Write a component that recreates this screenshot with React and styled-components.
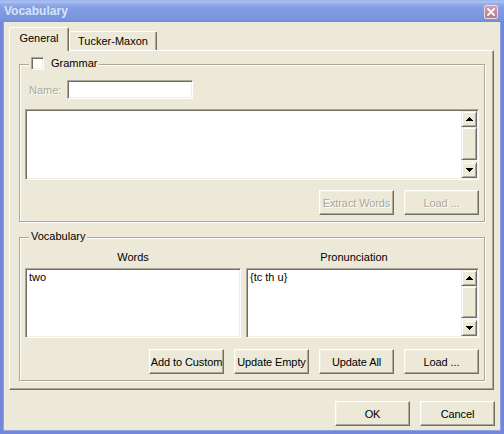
import React from 'react';
import styled, { createGlobalStyle } from 'styled-components';

const Global = createGlobalStyle`
  html, body { margin: 0; padding: 0; background: #ffffff; }
  body { font-family: "Liberation Sans", Arial, sans-serif; font-size: 11px; color: #000; }
  * { box-sizing: border-box; }
`;

const FONT = `"Liberation Sans", Arial, sans-serif`;

const Window = styled.div`
  width: 504px;
  height: 434px;
  display: flex;
  flex-direction: column;
`;

const TitleBar = styled.div`
  height: 22px;
  flex: none;
  display: flex;
  align-items: flex-start;
  justify-content: space-between;
  padding: 4px 6px 0 4px;
  background: linear-gradient(
    to bottom,
    #9cb3ea 0px,
    #abc1f2 2px,
    #93ace9 4px,
    #829de3 8px,
    #7c98e0 15px,
    #7893dd 20px,
    #6f8ad6 22px
  );
`;

const Title = styled.div`
  font: bold 12px/14px ${FONT};
  color: #d8e4f8;
`;

const CloseBtn = styled.div`
  width: 14px;
  height: 14px;
  margin-top: 1px;
  border: 1px solid #ecdce6;
  border-radius: 2px;
  background: linear-gradient(#d3a0b0, #c08596 60%, #b87a8c);
  display: flex;
  align-items: center;
  justify-content: center;
`;

const Frame = styled.div`
  flex: 1;
  display: flex;
  flex-direction: column;
  background: #ece9d8;
  border: 3px solid #7388dc;
  border-top: none;
  box-shadow: inset 1px 0 #8fa2e4, inset -1px 0 #8fa2e4, inset 0 -1px #8fa2e4;
  padding: 5px 6px 5px 6px;
`;

const TabRow = styled.div`
  display: flex;
  align-items: flex-end;
  height: 23px;
  position: relative;
  z-index: 1;
`;

const Tab = styled.div`
  width: ${(p) => p.$w}px;
  height: ${(p) => (p.$active ? 24 : 19)}px;
  margin-bottom: ${(p) => (p.$active ? -1 : 0)}px;
  background: #ece9d8;
  border: 1px solid;
  border-bottom: none;
  border-color: #ffffff #716f64 transparent #ffffff;
  box-shadow: inset -1px 0 #aca899;
  border-radius: 2px 2px 0 0;
  display: flex;
  justify-content: center;
  padding-top: ${(p) => (p.$active ? 4 : 3)}px;
  line-height: 13px;
  font-size: 11px;
`;

const Panel = styled.div`
  width: 485px;
  height: 340px;
  flex: none;
  border: 1px solid;
  border-color: #ffffff #716f64 #716f64 #ffffff;
  box-shadow: inset -1px -1px #aca899;
  padding: 13px 8px 0 9px;
  display: flex;
  flex-direction: column;
  gap: 15px;
`;

const Group = styled.div`
  position: relative;
  border: 1px solid #aca899;
  box-shadow: inset 1px 1px #ffffff, 1px 1px #ffffff;
  padding: ${(p) => p.$pad};
  display: flex;
  flex-direction: column;
`;

const Legend = styled.div`
  position: absolute;
  top: -8px;
  left: 9px;
  height: 13px;
  padding: 0 2px;
  background: #ece9d8;
  display: flex;
  align-items: center;
  gap: 7px;
  line-height: 13px;
`;

const CheckBox = styled.div`
  width: 13px;
  height: 13px;
  background: #ffffff;
  border: 1px solid;
  border-color: #aca899 #ffffff #ffffff #aca899;
  box-shadow: inset 1px 1px #716f64, inset -1px -1px #f1efe2;
`;

const NameRow = styled.div`
  display: flex;
  align-items: center;
  margin-left: 4px;
`;

const Label = styled.span`
  width: 38px;
  color: ${(p) => (p.$disabled ? '#aca899' : '#000')};
  text-shadow: ${(p) => (p.$disabled ? '1px 1px #ffffff' : 'none')};
`;

const Sunken = styled.div`
  background: #ffffff;
  border: 1px solid;
  border-color: #aca899 #ffffff #ffffff #aca899;
  box-shadow: inset 1px 1px #716f64, inset -1px -1px #f1efe2;
`;

const NameField = styled(Sunken)`
  width: 126px;
  height: 19px;
`;

const EditBox = styled(Sunken)`
  height: ${(p) => p.$h}px;
  margin-top: ${(p) => p.$mt || 0}px;
  display: flex;
  padding: 1px;
`;

const EditText = styled.div`
  flex: 1;
  padding: 1px 2px;
  line-height: 13px;
  white-space: pre;
`;

const ScrollBar = styled.div`
  width: 16px;
  flex: none;
  display: flex;
  flex-direction: column;
`;

const Raised = styled.div`
  background: #ece9d8;
  border: 1px solid;
  border-color: #f1efe2 #716f64 #716f64 #f1efe2;
  box-shadow: inset 1px 1px #ffffff, inset -1px -1px #aca899;
`;

const ScrollBtn = styled(Raised)`
  height: 16px;
  flex: none;
  display: flex;
  align-items: center;
  justify-content: center;
`;

const Track = styled.div`
  flex: 1;
  display: flex;
  flex-direction: column;
  padding-bottom: 2px;
  background-image: conic-gradient(#ffffff 25%, #ece9d8 0 50%, #ffffff 0 75%, #ece9d8 0);
  background-size: 2px 2px;
`;

const Thumb = styled(Raised)`
  flex: 1;
`;

const ButtonRow = styled.div`
  display: flex;
  justify-content: flex-end;
  gap: 10px;
  margin-top: ${(p) => p.$mt}px;
`;

const Button = styled.button`
  width: 75px;
  height: 25px;
  padding: 0;
  margin: 0;
  font: 11px ${FONT};
  letter-spacing: -0.1px;
  color: ${(p) => (p.disabled ? '#aca899' : '#000')};
  text-shadow: ${(p) => (p.disabled ? '1px 1px #ffffff' : 'none')};
  background: #ece9d8;
  border: 1px solid;
  border-color: #ffffff #716f64 #716f64 #ffffff;
  box-shadow: inset -1px -1px #aca899, inset 1px 1px #f1efe2;
  white-space: nowrap;
  overflow: hidden;
`;

const ListGrid = styled.div`
  display: grid;
  grid-template-columns: 216px 233px;
  column-gap: 5px;
  row-gap: 4px;
`;

const ColHead = styled.div`
  text-align: center;
  line-height: 13px;
  padding-right: ${(p) => (p.$sb ? 17 : 0)}px;
`;

const Footer = styled.div`
  display: flex;
  justify-content: flex-end;
  gap: 10px;
  margin-top: 11px;
`;

const Arrow = ({ down }) => (
  <svg width="7" height="4" viewBox="0 0 7 4" shapeRendering="crispEdges">
    <path
      fill="#000"
      d={
        down
          ? 'M0 0h7v1h-7z M1 1h5v1h-5z M2 2h3v1h-3z M3 3h1v1h-1z'
          : 'M3 0h1v1h-1z M2 1h3v1h-3z M1 2h5v1h-5z M0 3h7v1h-7z'
      }
    />
  </svg>
);

const VScroll = () => (
  <ScrollBar>
    <ScrollBtn>
      <Arrow />
    </ScrollBtn>
    <Track>
      <Thumb />
    </Track>
    <ScrollBtn>
      <Arrow down />
    </ScrollBtn>
  </ScrollBar>
);

export default function App() {
  return (
    <>
      <Global />
      <Window>
        <TitleBar>
          <Title>Vocabulary</Title>
          <CloseBtn>
            <svg width="8" height="8" viewBox="0 0 8 8">
              <path d="M1 1L7 7M7 1L1 7" stroke="#ffffff" strokeWidth="1.8" strokeLinecap="square" />
            </svg>
          </CloseBtn>
        </TitleBar>
        <Frame>
          <TabRow>
            <Tab $active $w={60}>General</Tab>
            <Tab $w={88}>Tucker-Maxon</Tab>
          </TabRow>
          <Panel>
            <Group $pad="15px 5px 6px 5px">
              <Legend>
                <CheckBox />
                <span>Grammar</span>
              </Legend>
              <NameRow>
                <Label $disabled>Name:</Label>
                <NameField />
              </NameRow>
              <EditBox $h={71} $mt={10}>
                <EditText />
                <VScroll />
              </EditBox>
              <ButtonRow $mt={10}>
                <Button disabled>Extract Words</Button>
                <Button disabled>Load ...</Button>
              </ButtonRow>
            </Group>
            <Group $pad="13px 5px 6px 5px">
              <Legend>
                <span>Vocabulary</span>
              </Legend>
              <ListGrid>
                <ColHead>Words</ColHead>
                <ColHead $sb>Pronunciation</ColHead>
                <EditBox $h={70}>
                  <EditText>two</EditText>
                </EditBox>
                <EditBox $h={70}>
                  <EditText>{'{tc th u}'}</EditText>
                  <VScroll />
                </EditBox>
              </ListGrid>
              <ButtonRow $mt={11}>
                <Button>Add to Custom</Button>
                <Button>Update Empty</Button>
                <Button>Update All</Button>
                <Button>Load ...</Button>
              </ButtonRow>
            </Group>
          </Panel>
          <Footer>
            <Button>OK</Button>
            <Button>Cancel</Button>
          </Footer>
        </Frame>
      </Window>
    </>
  );
}
